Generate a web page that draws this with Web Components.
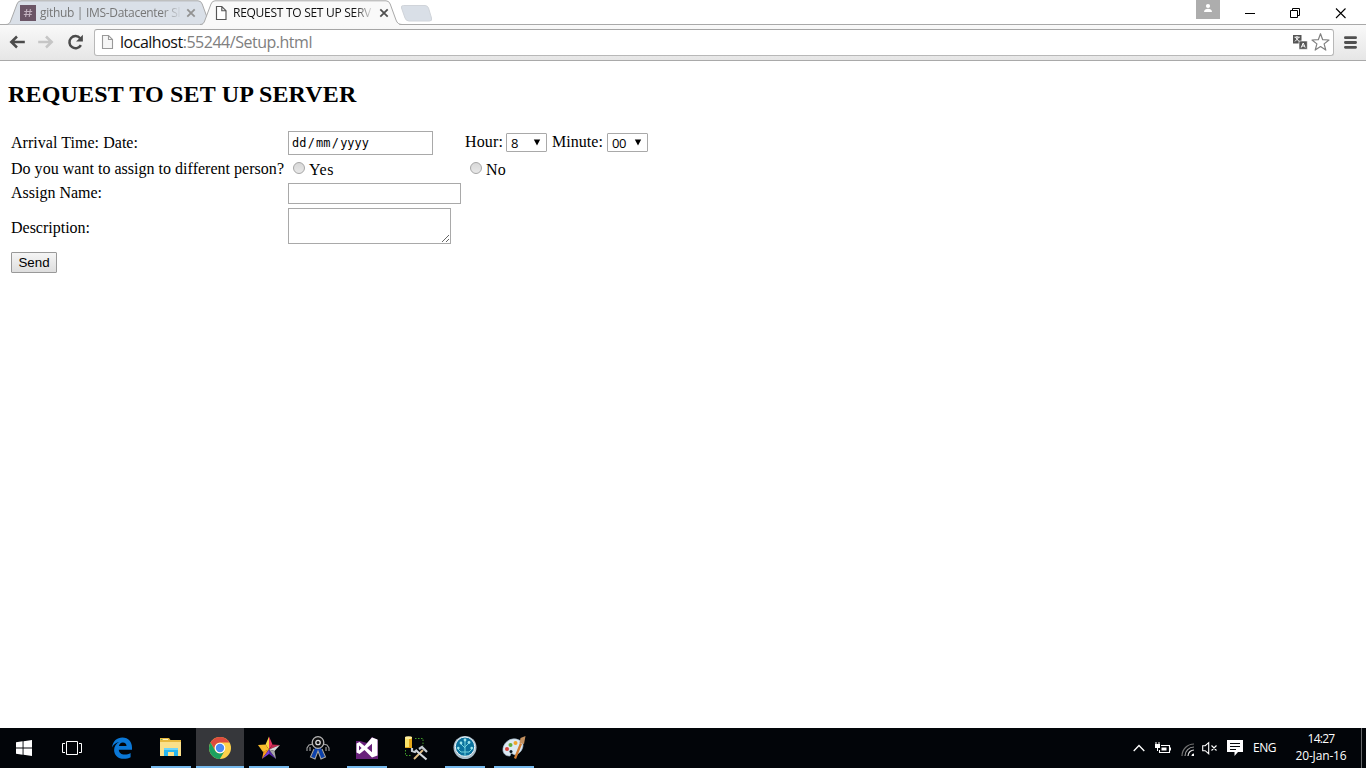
<!DOCTYPE html>
<html lang="en">
<head>
<meta charset="utf-8">
<title>REQUEST TO SET UP SERVER</title>
<style>
html,body{margin:0;height:100%;overflow:hidden;background:#fff}
</style>
</head>
<body>
<desktop-screen></desktop-screen>
<script>
const define = (name, html, setup) => {
  const t = document.createElement('template');
  t.innerHTML = html;
  customElements.define(name, class extends HTMLElement {
    connectedCallback() {
      if (this.shadowRoot) return;
      this.attachShadow({mode: 'open'}).append(t.content.cloneNode(true));
      if (setup) setup(this, this.shadowRoot);
    }
  });
};

// A line of text tracked to an exact width.
define('fit-text', `<style>:host{display:inline-block;white-space:pre}span{display:inline-block}</style><span><slot></slot></span>`, (el, root) => {
  const w = parseFloat(el.getAttribute('w'));
  const span = root.querySelector('span');
  const n = el.textContent.length;
  const natural = span.getBoundingClientRect().width;
  if (w && natural) { span.style.letterSpacing = ((w - natural) / n) + 'px'; el.style.width = w + 'px'; }
});

const icons = {
  hash: [16, `<path fill="#6b5566" d="M0 0h16v16H0z"/><path stroke="#c4b3c0" stroke-width="1.1" fill="none" d="M6.8 4 5.6 12M10.4 4 9.2 12M4.2 6.5h8M3.8 9.5h8"/>`],
  page: [16, `<path fill="#fff" stroke="#555" stroke-width="1.15" d="M3.5 1.5h5.3l4.2 4.2v8.8H3.5zM8.8 1.5v4.2H13"/>`],
  pageGrey: [16, `<path fill="#f6f6f6" stroke="#999" stroke-width="1.1" d="M2.500 1.500h6l4 4v9h-10zM8.500 1.500v4h4"/>`],
  close: [10, `<path stroke="currentColor" stroke-width="1.8" d="m1.300 1.300 7.400 7.400M8.700 1.300 1.300 8.700"/>`],
  back: [16, `<path fill="none" stroke="currentColor" stroke-width="2.500" d="M15.800 8H2.800M8 2.500 2.300 8 8 13.500"/>`],
  reload: [16, `<path fill="none" stroke="#4b4b4b" stroke-width="2.500" d="M13.900 11.100A6.100 6.100 0 1 1 13.200 4.200"/><path fill="#4b4b4b" d="M15.900.8v6.800H9.100z"/>`],
  translate: [16, `<path fill="#555" d="M1 1h8.500v8.500H1z"/><path fill="#555" stroke="#fff" stroke-width=".6" d="M7 7h8.300v8.300H7z"/><path fill="none" stroke="#fff" d="M2.500 3.200h5.200M5 2v1.200M3.500 3.500 7 7.400M6.800 3.500 3 7.400M9.200 13.600l2-4.600 2 4.600M10 12h2.400"/>`],
  star: [20, `<path fill="#fff" stroke="#808080" stroke-width="1.200" stroke-linejoin="round" d="m10.500 1.700 2.200 6 6.300.3-4.900 3.900 1.700 6.200-5.300-3.500-5.300 3.500 1.700-6.200L2 8l6.300-.3z"/>`],
  menu: [14, `<path stroke="#505050" stroke-width="2.800" stroke-linecap="round" d="M2.400 2.700h10.200M2.400 7.500h10.200M2.400 12.300h10.200"/>`],
  user: [24, `<path fill="#adadad" d="M0 0h24v19H0z"/><circle cx="12" cy="6" r="2.1" fill="#fff"/><path fill="#fff" d="M8 12c0-4.2 8-4.2 8 0z"/>`],
  min: [11, `<path stroke="#000" d="M0 5.500h10"/>`],
  restore: [11, `<path fill="none" stroke="#000" d="M.5 2.500h7v7h-7zM2.500 2.500v-2h7v7h-2"/>`],
  x: [11, `<path stroke="#000" stroke-width="1.100" d="m1 .5 9.500 9.500M10.500.5 1 10"/>`],
  windows: [16, `<path fill="#fff" d="M0 2.2 6.6 1.3v6.2H0zM7.5 1.2 16 0v7.5H7.5zM0 8.4h6.6v6.3L0 13.8zM7.5 8.4H16V16l-8.5-1.2z"/>`],
  taskview: [20, `<path fill="none" stroke="#fff" stroke-width="1" d="M4.5 3.5h11v13h-11zM3 5.500H.5v9H3M17 5.500h2.500v9H17"/>`],
  edge: [22, `<path fill="#0b78d7" d="M1 10.400C1.800 4 6 .5 11.400.5 17.600.5 21 5 21 10.600v2.200H7.800c.2 3.200 2.700 4.800 5.800 4.800 2.400 0 4.200-.6 6-1.700v4.300c-2 1-4.300 1.500-6.700 1.500-6.100 0-9.800-3.600-9.800-8.800 0-3.700 2-6.500 5.200-8C4.600 5.700 2.400 7.400 1 10.400zM7.900 9.100h7.600c0-2.400-1.400-3.700-3.700-3.700-2 0-3.500 1.400-3.900 3.700z"/>`],
  explorer: [22, `<path fill="#e8b93e" d="M0 1h9l1.500 2H21v16H0z"/><path fill="#fbe08a" d="M0 5h21v14H0z"/><path fill="#fff3c3" d="M3 2h5v1H3z"/><path fill="#4dbb6b" d="M1 2h1v1H1z"/><path fill="#27b5ef" d="M4 11h14v8h-4v-4H8v4H4z"/><path fill="#6fd5fa" d="M4 11h14v2H4z"/>`],
  chrome: [24, `<circle cx="12" cy="12" r="11" fill="#fdd14b"/><path fill="#dd4b3e" d="M2.500 6.500A11 11 0 0 1 21.500 6.500H12A5.500 5.500 0 0 0 7.200 14.700z"/><path fill="#1ba160" d="M2.500 6.500A11 11 0 0 0 11.900 23l4.800-8.200A5.500 5.500 0 0 1 7.200 14.700z"/><circle cx="12" cy="12" r="5.300" fill="#fff"/><circle cx="12" cy="12" r="4.200" fill="#4a8af4"/>`],
  colorstar: [24, `<path fill="#fbd743" d="M12 .5 8.500 8.500 12 13.500z"/><path fill="#e6325f" d="m12 .5 3.500 8L12 13.500z"/><path fill="#f9bd2c" d="M1 9l7.500-.5 3.500 5-6 2.500z"/><path fill="#c0284e" d="M15.500 8.500 23 9l-11 4.500z"/><path fill="#d9d9d9" d="M23 9l-5.500 6L12 13.500z"/><path fill="#f99a1f" d="m6.500 15.500 5.500-2L5 23z"/><path fill="#7b3fd8" d="M12 13.500V18l-7 5z"/><path fill="#5427a8" d="M12 13.500 19 23l-7-5z"/><path fill="#a9a9a9" d="m12 13.500 5.500 1.500L19 23z"/>`],
  agent: [26, `<path fill="#0b41ad" d="M10 13h6l4 9-4 2-3-8-3 8-4-2z"/><path fill="none" stroke="#a4a4a4" stroke-width="1.100" d="m8 9-4 1-2 3v3m3-4v4M18 9l4 1 2 3v3m-3-4v4M9 14 5.500 22l4.500 2 3-8 3 8 4.500-2L17 14"/><circle cx="13" cy="7.500" r="5.800" fill="#101010" stroke="#b5b5b5" stroke-width="1.300"/><circle cx="13" cy="7.500" r="2.200" fill="none" stroke="#ddd" stroke-width="1.300"/>`],
  vs: [24, `<path fill="#68217a" d="M1 5h4l7 2 5-6 6 3v19H1z"/><path fill="#fff" fill-rule="evenodd" d="m1.500 7.500 3-1.500 5 4L17 1.500l5.500 2v16l-5.500 2-7.500-7.500-5 4-3-1.500zM4 9.500v5l2.600-2.500zm13-1.700L12 12l5 4.200z"/>`],
  tools: [24, `<path fill="#e6a718" d="M1 1h7v11H1z"/><path fill="#fbe36a" d="M1 2h4v9H1z"/><ellipse cx="4.500" cy="1.700" rx="3.500" ry="1.400" fill="#fff0a1"/><path fill="none" stroke="#409c28" stroke-dasharray="1.500 1.500" d="M11 2.500h8V10M1.500 14v5.500H8"/><path stroke="#e0bd85" stroke-width="2" d="m10 23 9-9"/><path stroke="#d5d9de" stroke-width="2.200" d="m11.500 14 11 9.500"/><path fill="none" stroke="#c5ccd3" stroke-width="2.200" d="M8 12v3l3 1 2-2M15 13l3-2 5 5"/>`],
  tree: [26, `<circle cx="13" cy="12.500" r="11.500" fill="#a9bdc9"/><circle cx="13" cy="11.700" r="9.700" fill="#0b729d" stroke="#edf5f9"/><path fill="none" stroke="#72d2df" stroke-width="1" d="M13 21V5M13 17H9l-3-3M13 17h4l3-3M13 13l-4-4M13 12l4-4"/><g fill="#9ce5eb"><circle cx="13" cy="5" r="1.400"/><circle cx="9" cy="8" r="1.400"/><circle cx="17" cy="7.500" r="1.400"/><circle cx="6.300" cy="13" r="1.300"/><circle cx="19.700" cy="13" r="1.300"/></g>`],
  paint: [26, `<path fill="#dce9f3" stroke="#a9bfcf" stroke-width=".7" d="M18 5C10 1 1 8 2 16c1 4 4 5 7 5l1-3 4 2c5-1 8-6 8-10 0-3-2-4-4-5z"/><circle cx="6" cy="14" r="2" fill="#d94239"/><circle cx="9.500" cy="10" r="2" fill="#62ad3b"/><circle cx="14.500" cy="8" r="2" fill="#efa42b"/><circle cx="10" cy="16.500" r="1.500" fill="#07121b"/><path stroke="#d17c31" stroke-width="2.300" d="m14 23.500 6-15"/><path fill="#c29060" d="m18.500 8 1-5 5-2-1.500 8z"/>`],
  up: [12, `<path fill="none" stroke="#fff" stroke-width="1.300" d="m.7 9 5.300-5.500L11.300 9"/>`],
  battery: [16, `<path fill="none" stroke="#fff" stroke-width="1.100" d="M6 5.500h8.500v7h-10V10"/><path fill="#fff" d="M6.500 7.500h5v3h-5zM15 7.500h1v3h-1zM0 4h5v4H0zM.5 2h1v2h-1zM3.500 2h1v2h-1zM2 8h1v3H2z"/>`],
  wifi: [14, `<g fill="none" stroke="#737373" stroke-width="1.200"><path d="M1 13A12 12 0 0 1 13 1"/><path d="M4 13a9 9 0 0 1 9-9" stroke="#999"/><path d="M7 13a6 6 0 0 1 6-6" stroke="#ddd"/></g><path fill="#fff" d="M10.500 13a2.500 2.500 0 0 1 2.500-2.500V13z"/>`],
  volume: [16, `<path fill="none" stroke="#fff" stroke-width="1.100" d="M.7 5.700h2.500l3.500-3v11l-3.500-3H.7zM9.500 5.500l5 5M14.500 5.500l-5 5"/>`],
  message: [16, `<path fill="#fff" d="M0 0h16v12h-5l-3.500 4v-4H0z"/><path stroke="#05080c" d="M3 3.500h10M3 6.500h10M3 9.500h6"/>`]
};
define('ui-icon', `<style>:host{display:block;flex:none}svg{display:block;overflow:visible}</style><svg></svg>`, (el, root) => {
  const [size, art] = icons[el.getAttribute('name')];
  const svg = root.querySelector('svg');
  svg.setAttribute('viewBox', `0 0 ${size} ${size}`);
  svg.setAttribute('width', size); svg.setAttribute('height', size);
  svg.innerHTML = art;
});

define('browser-tab', `<style>
:host{display:block;position:relative;width:209px;height:25px;flex:none;font:12px "Open Sans",sans-serif;color:#777;--fill:#dae0e8}
:host([active]){z-index:2;width:204px;color:#111;--fill:#f9f9f9}
.shape{position:absolute;inset:0}
.row{position:relative;display:flex;align-items:center;height:25px;padding-left:14px}
.title{width:140px;margin-left:4px;overflow:hidden;line-height:18px;-webkit-mask:linear-gradient(90deg,#000 122px,transparent 142px)}
.x{color:#929292;margin-left:6px} :host([active]) .x{color:#505050;margin-left:7px}
</style><svg class="shape" width="209" height="25"></svg>
<div class="row"><slot name="icon"></slot><div class="title"><slot></slot></div><ui-icon class="x" name="close"></ui-icon></div>`, (el, root) => {
  const active = el.hasAttribute('active');
  const r = active ? 202 : 208;
  root.querySelector('svg').innerHTML =
    `<path d="M0 24.500C3 24.500 4 23 5 20L11 4Q12.200.8 15 .8H${r - 16}Q${r - 13} .8 ${r - 11.8} 4L${r - 6} 20Q${r - 4.5} 24.500 ${r} 24.500" fill="var(--fill)" stroke="#a9a9a9"/>` +
    (active ? '<path d="M3 24.500H199" stroke="#f9f9f9"/>' : '');
});

define('tab-strip', `<style>
:host{display:flex;height:25px;background:linear-gradient(#a9a9a9,#a9a9a9) 0 24px/100% 1px no-repeat #fff;padding-left:6px;box-sizing:border-box}
browser-tab+browser-tab{margin-left:-15px}
.new{margin:5px 0 0 -4px;flex:none}
.win{margin-left:auto;display:flex;padding-right:20px}
.win .user{margin-right:25px}.win .b{margin-top:8px;margin-right:34px}.win .b:last-child{margin-right:0}
</style>
<browser-tab><ui-icon slot="icon" name="hash"></ui-icon><fit-text w="152">github | IMS-Datacenter Slac</fit-text></browser-tab>
<browser-tab active><ui-icon slot="icon" name="page" style="margin-right:-1px;margin-left:-1px"></ui-icon><fit-text w="138" style="padding-left:1px">REQUEST TO SET UP SERV</fit-text></browser-tab>
<svg class="new" width="34" height="17"><path d="M3.500.5H25Q27.500.5 28.500 3L31.500 13Q32.500 16 29.500 16H9Q6 16 5 13L1.500 3Q.7.5 3.500.5z" fill="#d9dfe7" stroke="#d0d4da"/></svg>
<div class="win"><ui-icon class="user" name="user"></ui-icon><ui-icon class="b" name="min"></ui-icon><ui-icon class="b" name="restore"></ui-icon><ui-icon class="b" name="x"></ui-icon></div>`);

define('browser-toolbar', `<style>
:host{display:flex;align-items:center;height:36px;box-sizing:border-box;padding:0 9px 1px;background:linear-gradient(#f9f9f9,#e6e6e6);border-bottom:1px solid #a9a9a9}
.nav{display:flex;gap:13px;width:85px;color:#4b4b4b}.off{color:#c6c6c6}
.box{flex:1;height:27px;box-sizing:border-box;border:1px solid #b8b8b8;border-top-color:#a5a5a5;border-radius:3px;background:#fff;display:flex;align-items:center;padding:0 3px 0 5px;font:16px "Open Sans",sans-serif;color:#808080}
.box fit-text{margin-left:4px;line-height:22px}b{font-weight:400;color:#111}
.t{margin-left:auto;margin-right:2px}.m{margin-left:9px}
</style>
<div class="nav"><ui-icon name="back"></ui-icon><ui-icon class="off" name="back" style="transform:scaleX(-1)"></ui-icon><ui-icon name="reload"></ui-icon></div>
<div class="box"><ui-icon name="pageGrey"></ui-icon><fit-text w="192"><b>localhost</b>:55244/Setup.html</fit-text><ui-icon class="t" name="translate"></ui-icon><ui-icon name="star"></ui-icon></div>
<ui-icon class="m" name="menu"></ui-icon>`);

define('radio-option', `<style>:host{display:flex;align-items:center;gap:4px;padding-left:5px}i{width:10px;height:10px;border:1px solid #a6a6a6;border-radius:50%;background:linear-gradient(#d8d8d8,#e8e8e8);margin-top:-4px}</style><i></i><slot></slot>`);
define('select-box', `<style>:host{display:flex;align-items:center;justify-content:space-between;box-sizing:border-box;width:41px;height:19px;border:1px solid #a9a9a9;border-radius:1px;padding:0 5px 0 4px;font:13px "Open Sans",sans-serif;color:#000}svg{margin-top:-1px}</style><slot></slot><svg width="8" height="7"><path d="M.8.5h6.400L4 6.500z"/></svg>`);

define('form-row', `<style>:host{display:grid;grid-template-columns:277px 177px auto;align-items:center;justify-content:start}</style><slot></slot>`);

define('setup-page', `<style>
:host{display:block;padding:20px 8px 0;background:#fff;color:#000;font:16px "Liberation Serif",serif}
h2{margin:0 0 23px;font-size:24px;line-height:27px;font-weight:700}
.form{padding-left:3px}
form-row{line-height:18px}
.in{box-sizing:border-box;border:1px solid #a9a9a9;background:#fff}
.date{width:145px;height:24px;font:11.900px/23px "DejaVu Sans Mono",monospace;padding-left:3px;white-space:nowrap}.date i{font-style:normal;margin:0 1.300px}
.time{display:flex;align-items:center;height:19px;margin-top:-1px}
.time>fit-text{margin-top:-1px}
.area{width:163px;height:36px;display:flex;align-items:flex-end;justify-content:flex-end}
.send{display:block;margin-top:8px;width:46px;height:21px;box-sizing:border-box;border:1px solid #999;border-radius:1px;background:linear-gradient(#f5f5f5,#dedede);font:13.330px "Liberation Sans",sans-serif;color:#000;padding:0;text-align:center}
</style>
<h2><fit-text w="348.500">REQUEST TO SET UP SERVER</fit-text></h2>
<div class="form">
<form-row style="height:24px"><fit-text w="127">Arrival Time: Date:</fit-text><div class="in date">dd<i>/</i>mm<i>/</i>yyyy</div><div class="time"><fit-text w="38">Hour:</fit-text><select-box style="margin:0 5px 0 3px"><fit-text w="7">8</fit-text></select-box><fit-text w="51">Minute:</fit-text><select-box style="margin-left:4px"><fit-text w="14">00</fit-text></select-box></div></form-row>
<form-row style="height:20px;margin-top:4px"><fit-text w="273">Do you want to assign to different person?</fit-text><radio-option style="margin-top:2px"><fit-text w="25">Yes</fit-text></radio-option><radio-option style="margin-top:2px"><fit-text w="20">No</fit-text></radio-option></form-row>
<form-row style="height:21px;margin-top:4px"><fit-text w="91" style="margin-top:-2px">Assign Name:</fit-text><div class="in" style="width:173px;height:21px"></div></form-row>
<form-row style="height:36px;margin-top:4px"><fit-text w="79" style="margin-top:3px">Description:</fit-text><div class="in area"><svg width="10" height="10"><path d="m2 9 7-7M6 9l3-3" stroke="#555" stroke-width=".9"/></svg></div></form-row>
<button class="send">Send</button>
</div>`);

define('task-button', `<style>
:host{display:flex;width:48px;height:40px;margin-right:1px;align-items:center;justify-content:center;flex:none;box-sizing:border-box}
:host([running]){background:linear-gradient(#76b9ed,#76b9ed) center bottom/40px 2px no-repeat}
:host([active]){background:linear-gradient(#76b9ed,#76b9ed) center bottom/48px 2px no-repeat #36373b}
</style><slot></slot>`);

define('task-bar', `<style>
:host{display:flex;height:40px;background:#020509;color:#fff;font:12px/17px "Open Sans",sans-serif}
.first{margin-right:0}.second{margin-right:2px}
.tray{margin-left:auto;display:flex;align-items:center}
.clock{width:64px;display:flex;flex-direction:column;align-items:center;margin:-2px 0 0 13px}
.desk{border-left:1px solid #65676a;height:40px;width:4px;margin-left:8px}
</style>
<task-button class="first"><ui-icon name="windows"></ui-icon></task-button>
<task-button class="second"><ui-icon name="taskview"></ui-icon></task-button>
<task-button><ui-icon name="edge"></ui-icon></task-button>
<task-button running><ui-icon name="explorer"></ui-icon></task-button>
<task-button running active><ui-icon name="chrome"></ui-icon></task-button>
<task-button running><ui-icon name="colorstar"></ui-icon></task-button>
<task-button><ui-icon name="agent"></ui-icon></task-button>
<task-button running><ui-icon name="vs"></ui-icon></task-button>
<task-button><ui-icon name="tools"></ui-icon></task-button>
<task-button running><ui-icon name="tree"></ui-icon></task-button>
<task-button running><ui-icon name="paint"></ui-icon></task-button>
<div class="tray"><ui-icon name="up"></ui-icon><ui-icon name="battery" style="margin-left:10px"></ui-icon><ui-icon name="wifi" style="margin-left:10px;margin-top:3px"></ui-icon><ui-icon name="volume" style="margin-left:7px"></ui-icon><ui-icon name="message" style="margin-left:9px"></ui-icon><fit-text w="23" style="margin:-2px 0 0 10px">ENG</fit-text><div class="clock"><fit-text w="27">14:27</fit-text><fit-text w="51">20-Jan-16</fit-text></div><div class="desk"></div></div>`);

define('desktop-screen', `<style>:host{display:grid;grid-template-rows:25px 36px 1fr 40px;width:100%;height:100vh;overflow:hidden}</style>
<tab-strip></tab-strip><browser-toolbar></browser-toolbar><setup-page></setup-page><task-bar></task-bar>`);
</script>
</body>
</html>
